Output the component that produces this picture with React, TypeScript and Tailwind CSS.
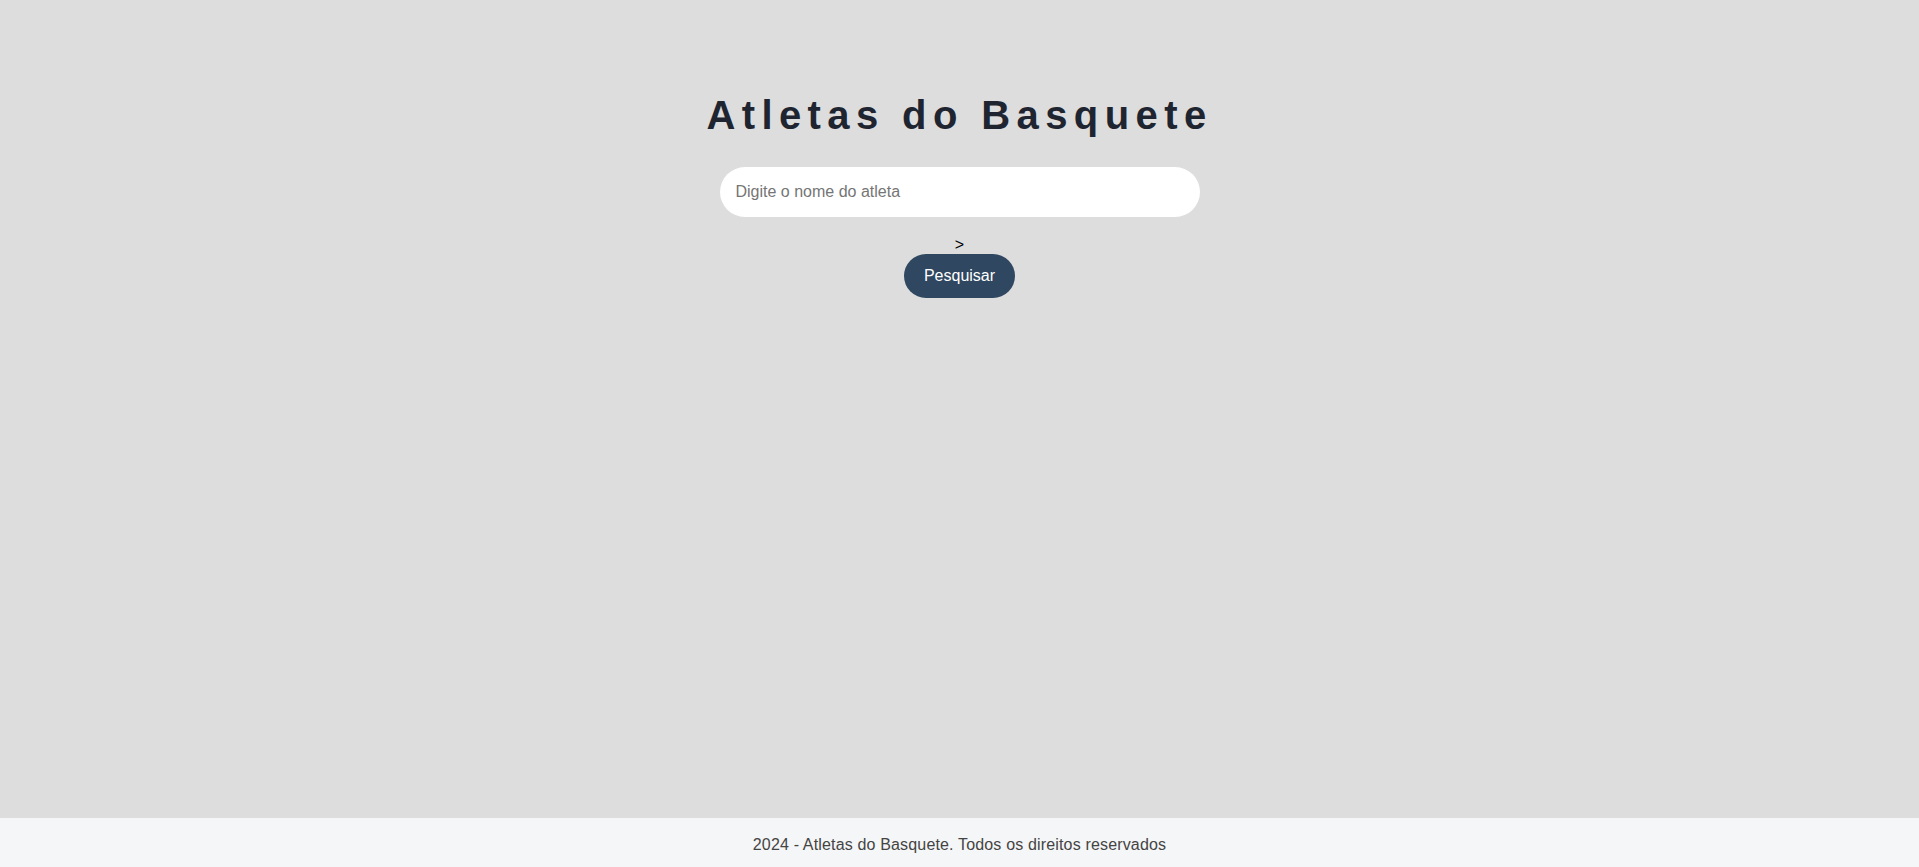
import { useState } from 'react'

export default function App() {
  const [nome, setNome] = useState('')

  return (
    <div className="min-h-screen flex flex-col bg-[#dddddd]">
      <main className="flex-1 flex flex-col items-center pt-[95px]">
        <h1 className="text-[40px] leading-[40px] font-bold tracking-[0.16em] text-[#1f2530] font-['Liberation_Sans',sans-serif]">
          Atletas do Basquete
        </h1>

        <input
          value={nome}
          onChange={e => setNome(e.target.value)}
          placeholder="Digite o nome do atleta"
          className="mt-[32px] w-[480px] h-[50px] rounded-full bg-white px-4 text-[16px] text-black outline-none placeholder:text-[#757575] font-['Liberation_Sans',Arial,sans-serif]"
        />

        <div className="mt-[19px] text-[16px] leading-[18px] text-black font-['Liberation_Sans',Arial,sans-serif]">
          &gt;
        </div>

        <button className="h-[44px] px-5 rounded-full bg-[#2f4760] text-white text-[16px] font-['Liberation_Sans',Arial,sans-serif]">
          Pesquisar
        </button>
      </main>

      <footer className="h-[49px] pt-[4px] flex items-center justify-center bg-[#f5f6f7] text-[16px] tracking-[0.01em] text-[#444444] font-['Liberation_Sans',sans-serif]">
        2024 - Atletas do Basquete. Todos os direitos reservados
      </footer>
    </div>
  )
}
